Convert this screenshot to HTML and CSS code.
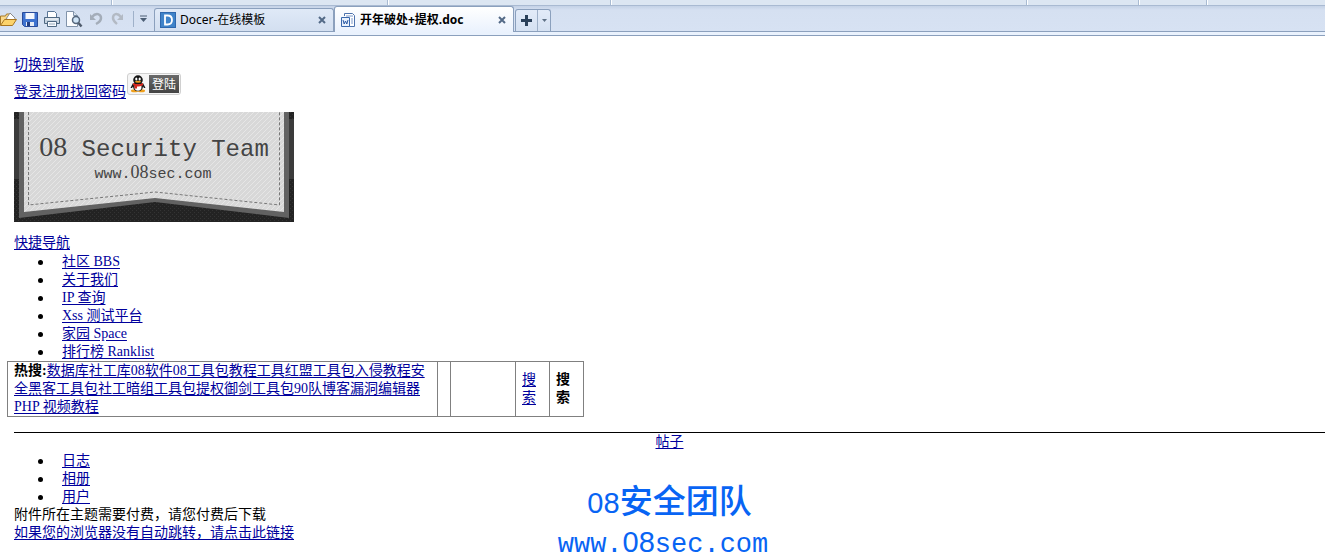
FILE: index.html
```
<!DOCTYPE html>
<html lang="zh-CN">
<head>
<meta charset="utf-8">
<title>开年破处+提权.doc</title>
<link rel="stylesheet" href="styles.css">
</head>
<body>
<header class="chrome">
  <div class="ribbon"><i class="g1"></i><i class="g2"></i><i class="g3"></i><i class="g4"></i><i class="g5"></i><i class="g6"></i></div>
  <div class="bar">
    <div class="tools">
      <button class="tool" aria-label="打开"><svg width="18" height="18" viewBox="1 0 18 18"><path d="M1.500 15V6h5l1-2h4v4" fill="#fbd98a" stroke="#a87a28"/><path d="M7 9l4-6 5 5v3z" fill="#fff" stroke="#8a8a8a"/><path d="M1.500 15.500l4-6h12l-4 6z" fill="#fcd36b" stroke="#a87520"/></svg></button>
      <button class="tool" aria-label="保存"><svg width="18" height="18" viewBox="0 0 18 18"><path d="M1.500 2.500h15v14h-13l-2-2z" fill="#3f73cf" stroke="#2a4c9b"/><path d="M4.500 3h9v6h-9z" fill="#f5f8fd"/><path d="M5 12h8v4H5z" fill="#e6ecf5"/><path d="M6 12h3v4H6z" fill="#243f80"/></svg></button>
      <button class="tool" aria-label="打印"><svg width="18" height="18" viewBox="0 0 18 18"><path d="M4.500 7V1.500h7l2 2V7" fill="#fff" stroke="#5a7696"/><path d="M1.500 7.500h15v6h-15z" fill="#c5d2df" stroke="#4f6882"/><path d="M3 9h12" stroke="#fff"/><path d="M4.500 11.500h9v5h-9z" fill="#f8fbff" stroke="#4f6882"/><path d="M6 14h6" stroke="#9ab"/></svg></button>
      <button class="tool" aria-label="打印预览"><svg width="18" height="18" viewBox="0 0 18 18"><path d="M1.500 1.500h7l4 4v11h-11z" fill="#fcfdff" stroke="#8193aa"/><path d="M8.500 1.500v4h4" fill="#dce5ef" stroke="#8193aa"/><circle cx="11" cy="10" r="3.500" fill="#cfe4f7" stroke="#56677c" stroke-width="1.500"/><path d="M13.500 13l3 3.500" stroke="#4f5b6c" stroke-width="2.500"/></svg></button>
      <button class="tool" aria-label="撤销"><svg width="18" height="18" viewBox="0 0 18 18"><path d="M5 7c4-5 9-3 9 1 0 3-3 5-5 6" fill="none" stroke="#a4adb9" stroke-width="2.500"/><path d="M3 4v6h6z" fill="#a4adb9"/></svg></button>
      <button class="tool" aria-label="恢复"><svg width="18" height="18" viewBox="0 0 18 18"><path d="M12 7C8 2 4 4 4 8c0 3 3 5 4 6" fill="none" stroke="#b3bac4" stroke-width="2.500"/><path d="M14 4v6H8z" fill="#b3bac4"/></svg></button>
      <span class="sep"></span>
      <button class="more" aria-label="更多"><svg width="9" height="8" viewBox="0 0 9 8"><path d="M1 1h7" stroke="#4c5e75"/><path d="M1 3h7L4.500 7z" fill="#4c5e75"/></svg></button>
    </div>
    <div class="tab">
      <svg width="16" height="16" viewBox="0 0 16 16"><path d="M0 0h16v16H0z" fill="#2e68ae"/><path d="M1 1h14v14H1z" fill="#3f83c9"/><path d="M5 3.500h2.500c3 0 4.500 1.500 4.500 4.500s-1.500 4.500-4.500 4.500H5z" fill="none" stroke="#fff" stroke-width="1.800"/></svg>
      <span class="label">Docer-在线模板</span>
      <button class="close" aria-label="关闭"><svg width="8" height="8" viewBox="0 0 8 8"><path d="M1 1l6 6M7 1L1 7" stroke="#536a87" stroke-width="2"/></svg></button>
    </div>
    <div class="tab active">
      <svg width="16" height="16" viewBox="0 0 16 16"><path d="M4.500 4V1.500h8l2 2v11H9" fill="#fff" stroke="#4d73ad"/><path d="M6 4h7M11 7h2M11 9h2M11 11h2" stroke="#7c9acb"/><path d="M1.500 5.500h8v9h-8z" fill="#e9f1fc" stroke="#3a68ac"/><path d="M3 8l1.200 4L5.500 9l1.300 3L8 8" fill="none" stroke="#2b5aa5"/></svg>
      <span class="label">开年破处+提权.doc</span>
      <button class="close" aria-label="关闭"><svg width="8" height="8" viewBox="0 0 8 8"><path d="M1 1l6 6M7 1L1 7" stroke="#536a87" stroke-width="2"/></svg></button>
    </div>
    <div class="newtab">
      <button class="plus" aria-label="新建"><svg width="11" height="11" viewBox="0 0 11 11"><path d="M5.500 0v11M0 5.500h11" stroke="#2a4059" stroke-width="3"/></svg></button>
      <button class="drop" aria-label="新建选项"><svg width="5" height="3" viewBox="0 0 5 3"><path d="M0 0h5L2.500 3z" fill="#5f7186"/></svg></button>
    </div>
  </div>
</header>
<main class="doc">
  <div class="line"><a href="#">切换到窄版</a></div>
  <div class="login">
    <span><a href="#">登录</a><a href="#">注册</a><a href="#">找回密码</a></span>
    <button class="qq"><svg width="18" height="18" viewBox="0 0 18 18"><ellipse cx="5.500" cy="15.800" rx="3.500" ry="1.500" fill="#f0a01c"/><ellipse cx="12.500" cy="15.800" rx="3.500" ry="1.500" fill="#f0a01c"/><path d="M4 8L1.500 13l1.500 0 2-3zM14 8l2.500 5-1.500 0-2-3z" fill="#151515"/><ellipse cx="9" cy="11.500" rx="5" ry="4.800" fill="#151515"/><ellipse cx="9" cy="12" rx="3.500" ry="3.800" fill="#fff"/><ellipse cx="9" cy="5" rx="4.800" ry="4.700" fill="#151515"/><ellipse cx="7.300" cy="4" rx="1.100" ry="1.500" fill="#fff"/><ellipse cx="10.700" cy="4" rx="1.100" ry="1.500" fill="#fff"/><ellipse cx="9" cy="6.700" rx="3" ry="1" fill="#f0a01c"/><path d="M4 8q5 2.500 10 0v2.200q-4 1.800-6 1.200v2.100H5.500v-2.700L4 10z" fill="#d8261c"/></svg><span>登陆</span></button>
  </div>
  <svg class="logo" width="280" height="110" viewBox="0 0 280 110" role="img" aria-label="08 Security Team">
    <defs>
      <pattern id="cloth" width="5" height="5" patternUnits="userSpaceOnUse"><path d="M0 0h5v5H0z" fill="#d8d8d8"/><path d="M-1 1l2-2M0 5l5-5M4 6l2-2" stroke="#e6e6e6"/></pattern>
      <pattern id="mesh" width="4" height="4" patternUnits="userSpaceOnUse"><path d="M0 0h4v4H0z" fill="#232323"/><path d="M0 0h1v1H0zM2 2h1v1H2z" fill="#343434"/></pattern>
    </defs>
    <path d="M0 0h280v110H0z" fill="url(#mesh)"/>
    <path d="M0 7h280v60H0z" fill="#3b3b3b"/>
    <path d="M5 0h270v106L141 90 5 106z" fill="#626262"/>
    <path d="M10 0h260v100L141 86 10 100z" fill="url(#cloth)"/>
    <path d="M14.500 0v93L141 80l124.500 13V0" fill="none" stroke="#777" stroke-dasharray="3 2"/>
    <text class="logo-name" x="140" y="44"><tspan class="num">08</tspan> Security Team</text>
    <text class="logo-url" x="139" y="66">www.<tspan class="num">08</tspan>sec.com</text>
  </svg>
  <div class="line"><a href="#">快捷导航</a></div>
  <ul class="list">
    <li><a href="#">社区 BBS</a></li>
    <li><a href="#">关于我们</a></li>
    <li><a href="#">IP 查询</a></li>
    <li><a href="#">Xss 测试平台</a></li>
    <li><a href="#">家园 Space</a></li>
    <li><a href="#">排行榜 Ranklist</a></li>
  </ul>
  <table class="search">
    <tr>
      <td class="hot"><b>热搜:</b><a href="#">数据库</a><a href="#">社工库</a><a href="#">08软件</a><a href="#">08工具包</a><a href="#">教程工具</a><a href="#">红盟工具包</a><a href="#">入侵教程</a><a href="#">安<br>全</a><a href="#">黑客工具包</a><a href="#">社工</a><a href="#">暗组工具包</a><a href="#">提权</a><a href="#">御剑工具包</a><a href="#">90队博客</a><a href="#">漏洞</a><a href="#">编辑器<br></a><a href="#">PHP 视频教程</a></td>
      <td class="thin"></td>
      <td class="blank"></td>
      <td class="word"><a href="#">搜索</a></td>
      <td class="word"><b>搜索</b></td>
    </tr>
  </table>
  <div class="post"><a href="#">帖子</a></div>
  <div class="lower">
    <div class="links">
      <ul class="list">
        <li><a href="#">日志</a></li>
        <li><a href="#">相册</a></li>
        <li><a href="#">用户</a></li>
      </ul>
      <div>附件所在主题需要付费，请您付费后下载</div>
      <div><a href="#">如果您的浏览器没有自动跳转，请点击此链接</a></div>
    </div>
    <div class="mark">
      <div class="team"><span class="digits">08</span>安全团队</div>
      <div class="site">www.<span class="digits">08</span>sec.com</div>
    </div>
  </div>
</main>
</body>
</html>
```
FILE: styles.css
```
* { box-sizing: border-box; }
body {
  margin: 0;
  background: #fff;
  color: #000;
  font: 14px/18px "Liberation Serif", "Noto Sans CJK SC", serif;
  overflow: hidden;
}
button { border: 0; padding: 0; background: none; font: inherit; }
svg { display: block; flex: none; }
a { color: #00009c; text-decoration: underline; text-underline-offset: 2px; }

.chrome {
  font: 12px/16px "Noto Sans", "Noto Sans CJK SC", sans-serif;
  border-bottom: 1px solid #8ba0bd;
  background: #eaf2fd;
  padding-bottom: 3px;
}
.ribbon { display: flex; height: 5px; background: #dce6f2; }
.ribbon i { border-right: 1px solid #a9bbd2; box-shadow: 1px 0 #fff; }
.g1 { flex: 111; } .g2 { flex: 277; } .g3 { flex: 223; } .g4 { flex: 417; } .g5 { flex: 111; } .g6 { flex: 67; }
.ribbon::after { content: ""; flex: 119; }
.bar {
  display: flex;
  align-items: flex-end;
  height: 27px;
  border-top: 1px solid #a9bad2;
  border-bottom: 1px solid #8ba0bd;
  background: linear-gradient(#c4d2e6, #d5e0f1 4px, #d7e2f3);
}
.tools { display: flex; align-items: center; width: 154px; height: 25px; }
.tool { display: flex; justify-content: center; width: 22px; }
.tool:first-child { justify-content: flex-start; width: 19px; }
.sep { width: 1px; height: 16px; margin: 0 5px 0 4px; background: #9fb1c9; }
.tab {
  display: flex;
  align-items: center;
  gap: 4px;
  width: 180px;
  height: 23px;
  padding: 0 7px 0 5px;
  border: 1px solid #8ba0bd;
  border-bottom: 0;
  border-radius: 3px 3px 0 0;
  background: linear-gradient(#dfe9f7, #d3dff0);
}
.tab.active {
  height: 26px;
  margin-bottom: -1px;
  background: linear-gradient(#fff, #eaf2fd);
  font-weight: bold;
}
.label { flex: 1; white-space: nowrap; }
.newtab {
  display: flex;
  width: 36px;
  height: 22px;
  margin-left: 1px;
  border: 1px solid #8ba0bd;
  border-bottom: 0;
  border-radius: 3px 3px 0 0;
  background: linear-gradient(#e2ebf8, #d5e1f2);
}
.plus, .drop { display: flex; align-items: center; justify-content: center; }
.plus { flex: 1; border-right: 1px solid #9fb1c9; }
.drop { width: 12px; }

.doc { padding: 20px 0 0 14px; }
.login { display: flex; align-items: flex-end; gap: 1px; height: 27px; }
.qq {
  display: flex;
  align-items: center;
  gap: 2px;
  width: 54px;
  height: 22px;
  margin-bottom: 6px;
  padding: 1px;
  border: 1px solid #d0d0d0;
  border-radius: 3px;
  background: #f5f5f5;
}
.qq span {
  flex: 1;
  background: linear-gradient(#6a6a6a, #444);
  color: #fff;
  font: 12px/18px "Noto Sans CJK SC", sans-serif;
}
.logo { margin: 11px 0 12px; }
.logo text { text-anchor: middle; fill: #444; font-family: "Liberation Mono", monospace; }
.logo .logo-name { font-size: 24px; }
.logo .logo-url { font-size: 15px; }
.logo .num { font-family: "Liberation Serif", serif; }
.logo-name .num { font-size: 28px; }
.logo-url .num { font-size: 18px; }

.list { margin: 0; padding: 1px 0 0 48px; list-style: none; }
.list li { display: flex; align-items: center; }
.list li::before {
  content: "";
  width: 5px;
  height: 5px;
  margin: 0 19px 0 -24px;
  border-radius: 50%;
  background: #000;
}

.search { margin: 0 0 15px -7px; border-collapse: collapse; }
.search td { padding: 0 6px; border: 1px solid #808080; }
.hot { width: 430px; white-space: nowrap; }
.search .thin { width: 13px; }
.blank { width: 65px; }
.search .word { width: 34px; }

.post { border-top: 1px solid #000; text-align: center; }
.lower { display: grid; }
.links, .mark { grid-area: 1 / 1; }
.links { justify-self: start; }
.mark {
  justify-self: center;
  padding-top: 34px;
  color: #0864f4;
  font: 27px/40px "Liberation Mono", "Noto Sans CJK SC", monospace;
  text-align: center;
}
.team { font-size: 33px; font-weight: 500; }
.digits { font-family: "Liberation Sans", sans-serif; font-size: 29px; font-weight: 400; line-height: 1; }
.site { padding-right: 13px; }
```
